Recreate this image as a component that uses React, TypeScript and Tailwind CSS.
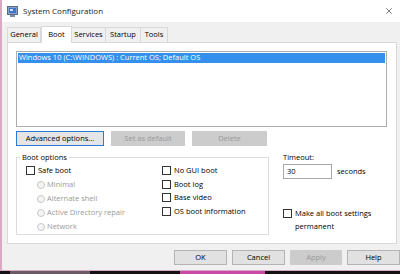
import { X } from 'lucide-react'

const font = { fontFamily: '"Open Sans", "Noto Sans", sans-serif' }

function Check({ label, lines }: { label?: string; lines?: string[] }) {
  return (
    <div className="flex items-start gap-[3px]">
      <div className="mt-[2px] h-[9px] w-[9px] shrink-0 border border-[#333] bg-white" />
      <div className="leading-[13.5px]">
        {lines ? lines.map((l) => <div key={l}>{l}</div>) : label}
      </div>
    </div>
  )
}

function Radio({ label }: { label: string }) {
  return (
    <div className="flex h-[14px] items-center gap-[2px] text-[#9a9a9a]">
      <div className="h-[8px] w-[8px] rounded-full border border-[#c8c8c8] bg-[#f4f4f4]" />
      <span>{label}</span>
    </div>
  )
}

function Btn({
  children,
  w,
  variant = 'normal',
}: {
  children: string
  w: string
  variant?: 'normal' | 'focus' | 'disabled'
}) {
  const cls =
    variant === 'focus'
      ? 'border-[#2a7ad6] bg-[#e5e5e5] text-black'
      : variant === 'disabled'
        ? 'border-[#cccccc] bg-[#cccccc] text-[#9a9a9a]'
        : 'border-[#b4b4b4] bg-[#e1e1e1] text-black'
  return (
    <div className={`flex h-[15px] items-center justify-center border ${cls} ${w}`}>{children}</div>
  )
}

export default function App() {
  return (
    <div className="h-[274px] w-[400px] overflow-hidden bg-[#141014] text-[7.5px] text-black" style={font}>
      <div className="flex h-[271px] w-[400px] flex-col border-b border-l-2 border-[#d8a9c2] bg-[#f0f0f0]">
        {/* title bar */}
        <div className="flex h-[22px] shrink-0 items-center bg-white pl-[5px] pr-[5px]">
          <svg width="11" height="11" viewBox="0 0 11 11" className="mr-[5px]">
            <rect x="0.5" y="0.5" width="10" height="8" fill="#8aa2c8" stroke="#5a6b88" />
            <rect x="2" y="2" width="7" height="5" fill="#3f73c4" />
            <rect x="3" y="3" width="3" height="2" fill="#cfe0f5" />
            <rect x="3" y="9" width="5" height="2" fill="#7f8a99" />
          </svg>
          <span className="text-[8px] text-[#222]">System Configuration</span>
          <X className="ml-auto mr-[1px] h-[10px] w-[10px] text-[#333]" strokeWidth={1.5} />
        </div>

        {/* tabs */}
        <div className="mt-[4px] flex h-[16px] items-end pl-[5px]">
          <div className="flex h-[15px] w-[34px] items-center justify-center border border-b-0 border-[#d9d9d9]">General</div>
          <div className="relative z-10 mb-[-1px] flex h-[17px] w-[31px] items-center justify-center border border-b-0 border-[#d9d9d9] bg-white">
            Boot
          </div>
          <div className="flex h-[15px] w-[34px] items-center justify-center border border-b-0 border-l-0 border-[#d9d9d9]">Services</div>
          <div className="flex h-[15px] w-[35px] items-center justify-center border border-b-0 border-l-0 border-[#d9d9d9]">Startup</div>
          <div className="flex h-[15px] w-[27px] items-center justify-center border border-b-0 border-l-0 border-[#d9d9d9]">Tools</div>
        </div>

        {/* tab panel */}
        <div className="ml-[5px] flex h-[202px] w-[390px] flex-col border border-[#d9d9d9] bg-white px-[8px] pt-[8px]">
          <div className="h-[76px] w-[371px] border border-[#adadad] p-[1px]">
            <div className="flex h-[10px] items-center bg-[#3390ec] pl-[1px] text-white">
              Windows 10 (C:\WINDOWS) : Current OS; Default OS
            </div>
          </div>

          <div className="mt-[4px] flex gap-[7px]">
            <Btn w="w-[88px]" variant="focus">Advanced options...</Btn>
            <Btn w="w-[74px]" variant="disabled">Set as default</Btn>
            <Btn w="w-[75px]" variant="disabled">Delete</Btn>
          </div>

          <div className="mt-[7px] flex">
            {/* boot options group */}
            <div className="relative mt-[4px] flex h-[78px] w-[253px] border border-[#dcdcdc] pl-[9px] pt-[6px]">
              <span className="absolute left-[3px] top-[-7px] bg-white px-[2px] leading-[12px]">Boot options</span>
              <div className="flex w-[136px] flex-col">
                <Check label="Safe boot" />
                <div className="ml-[11px] flex flex-col">
                  <Radio label="Minimal" />
                  <Radio label="Alternate shell" />
                  <Radio label="Active Directory repair" />
                  <Radio label="Network" />
                </div>
              </div>
              <div className="flex flex-col">
                <Check label="No GUI boot" />
                <Check label="Boot log" />
                <Check label="Base video" />
                <Check label="OS boot information" />
              </div>
            </div>

            {/* timeout */}
            <div className="ml-[14px] mt-[-2px] flex flex-col">
              <div className="leading-[12px]">Timeout:</div>
              <div className="mt-[1px] flex items-center">
                <div className="flex h-[15px] w-[49px] items-center border border-[#a8a8a8] pl-[3px]">30</div>
                <span className="ml-[5px]">seconds</span>
              </div>
              <div className="mt-[28px] [&_div.leading-\[13\.5px\]]:leading-[13px]">
                <Check lines={['Make all boot settings', 'permanent']} />
              </div>
            </div>
          </div>
        </div>

        {/* footer buttons */}
        <div className="mt-[6px] flex gap-[5px] pl-[172px]">
          <Btn w="w-[53px]">OK</Btn>
          <Btn w="w-[53px]">Cancel</Btn>
          <Btn w="w-[52px]" variant="disabled">Apply</Btn>
          <Btn w="w-[53px]">Help</Btn>
        </div>
      </div>
      <div className="flex h-[3px]">
        <div className="ml-[10px] w-[80px] bg-[#6b5a66]" />
        <div className="ml-[90px] w-[85px] bg-[#c84aa6]" />
      </div>
    </div>
  )
}
